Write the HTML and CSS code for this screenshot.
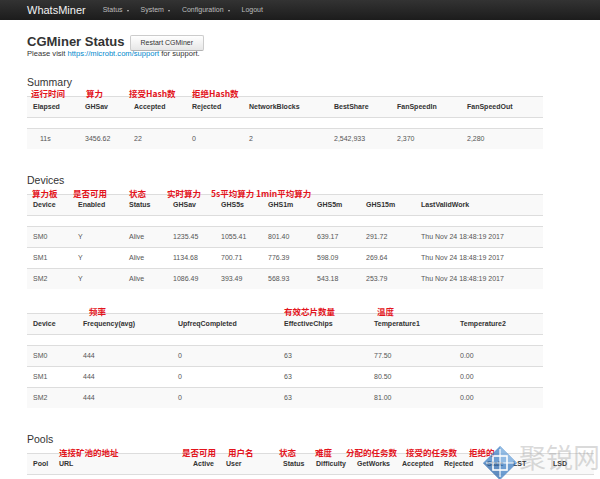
FILE: index.html
```html
<!DOCTYPE html>
<html lang="zh">
<head>
<meta charset="utf-8">
<title>WhatsMiner - CGMiner Status</title>
<link rel="stylesheet" href="styles.css">
</head>
<body>
<header class="navbar">
  <span class="brand">WhatsMiner</span>
  <ul class="nav">
    <li><a>Status<i class="caret"></i></a></li>
    <li><a>System<i class="caret"></i></a></li>
    <li><a>Configuration<i class="caret"></i></a></li>
    <li><a>Logout</a></li>
  </ul>
</header>
<main class="page">
  <div class="title-row">
    <h1>CGMiner Status</h1>
    <button class="btn">Restart CGMiner</button>
  </div>
  <p class="support">Please visit <a href="#">https://microbt.com/support</a> for support.</p>

  <h3 class="section">Summary</h3>
  <div class="tbl-wrap">
    <span class="note s1">运行时间</span>
    <span class="note s2">算力</span>
    <span class="note s3">接受Hash数</span>
    <span class="note s4">拒绝Hash数</span>
    <table class="t516">
      <colgroup>
        <col class="w52"><col class="w49"><col class="w58"><col class="w57"><col class="w85"><col class="w63"><col class="w70"><col class="w82">
      </colgroup>
      <tr class="odd"><th>Elapsed</th><th>GHSav</th><th>Accepted</th><th>Rejected</th><th>NetworkBlocks</th><th>BestShare</th><th>FanSpeedIn</th><th>FanSpeedOut</th></tr>
      <tr class="gap"><td colspan="8">&nbsp;</td></tr>
      <tr class="odd"><td class="indent">11s</td><td>3456.62</td><td>22</td><td>0</td><td>2</td><td>2,542,933</td><td>2,370</td><td>2,280</td></tr>
    </table>
  </div>

  <h3 class="section">Devices</h3>
  <div class="tbl-wrap">
    <span class="note d1">算力板</span>
    <span class="note d2">是否可用</span>
    <span class="note d3">状态</span>
    <span class="note d4">实时算力</span>
    <span class="note d5">5s平均算力</span>
    <span class="note d6">1min平均算力</span>
    <table class="t516">
      <colgroup>
        <col class="w45"><col class="w51"><col class="w44"><col class="w48"><col class="w47"><col class="w49"><col class="w49"><col class="w55"><col class="w128">
      </colgroup>
      <tr class="odd"><th>Device</th><th>Enabled</th><th>Status</th><th>GHSav</th><th>GHS5s</th><th>GHS1m</th><th>GHS5m</th><th>GHS15m</th><th>LastValidWork</th></tr>
      <tr class="gap"><td colspan="9">&nbsp;</td></tr>
      <tr class="odd"><td>SM0</td><td>Y</td><td>Alive</td><td>1235.45</td><td>1055.41</td><td>801.40</td><td>639.17</td><td>291.72</td><td>Thu Nov 24 18:48:19 2017</td></tr>
      <tr><td>SM1</td><td>Y</td><td>Alive</td><td>1134.68</td><td>700.71</td><td>776.39</td><td>598.09</td><td>269.64</td><td>Thu Nov 24 18:48:19 2017</td></tr>
      <tr class="odd"><td>SM2</td><td>Y</td><td>Alive</td><td>1086.49</td><td>393.49</td><td>568.93</td><td>543.18</td><td>253.79</td><td>Thu Nov 24 18:48:19 2017</td></tr>
    </table>
  </div>

  <div class="tbl-wrap">
    <span class="note e1">频率</span>
    <span class="note e2">有效芯片数量</span>
    <span class="note e3">温度</span>
    <table class="t516">
      <colgroup>
        <col class="w50"><col class="w95"><col class="w106"><col class="w90"><col class="w86"><col class="w89">
      </colgroup>
      <tr class="odd"><th>Device</th><th>Frequency(avg)</th><th>UpfreqCompleted</th><th>EffectiveChips</th><th>Temperature1</th><th>Temperature2</th></tr>
      <tr class="gap"><td colspan="6">&nbsp;</td></tr>
      <tr class="odd"><td>SM0</td><td>444</td><td>0</td><td>63</td><td>77.50</td><td>0.00</td></tr>
      <tr><td>SM1</td><td>444</td><td>0</td><td>63</td><td>80.50</td><td>0.00</td></tr>
      <tr class="odd"><td>SM2</td><td>444</td><td>0</td><td>63</td><td>81.00</td><td>0.00</td></tr>
    </table>
  </div>

  <h3 class="section">Pools</h3>
  <div class="tbl-wrap">
    <span class="note p1">连接矿池的地址</span>
    <span class="note p2">是否可用</span>
    <span class="note p3">用户名</span>
    <span class="note p4">状态</span>
    <span class="note p5">难度</span>
    <span class="note p6">分配的任务数</span>
    <span class="note p7">接受的任务数</span>
    <span class="note p8">拒绝的</span>
    <table class="t567">
      <colgroup>
        <col class="w26"><col class="w134"><col class="w33"><col class="w57"><col class="w33"><col class="w41"><col class="w45"><col class="w42"><col class="w43"><col class="w26"><col class="w40"><col class="w47">
      </colgroup>
      <tr class="odd"><th>Pool</th><th>URL</th><th>Active</th><th>User</th><th>Status</th><th>Difficulty</th><th>GetWorks</th><th>Accepted</th><th>Rejected</th><th>Stale</th><th>LST</th><th>LSD</th></tr>
      <tr class="gap"><td colspan="12">&nbsp;</td></tr>
    </table>
  </div>
</main>

<div class="wm-logo">
  <svg width="34" height="34" viewBox="0 0 34 34">
    <polygon points="17,0 34,17 17,34 0,17" fill="#3f7fc4"/>
    <polygon points="17,0 34,17 17,17" fill="#6fa6dc"/>
    <polygon points="0,17 17,34 17,17" fill="#2f6aae"/>
    <rect x="10" y="10" width="14" height="14" fill="none" stroke="#fff" stroke-width="1.6"/>
    <path d="M17 3 V31 M3 17 H31" stroke="#fff" stroke-width="1.2"/>
  </svg>
</div>
<div class="wm-text">聚锐网</div>
</body>
</html>
```
FILE: styles.css
```css
* { box-sizing: border-box; }
html, body { margin: 0; background: #fff; }
body {
  font-family: "Liberation Sans", Arial, sans-serif;
  color: #333;
  width: 600px;
  height: 479px;
  overflow: hidden;
  position: relative;
}

/* navbar */
.navbar {
  height: 20px;
  display: flex;
  align-items: center;
  padding-left: 27px;
  background: linear-gradient(#333, #1c1c1c);
}
.brand {
  font-size: 11px;
  line-height: 20px;
  color: #f2f2f2;
}
.nav {
  display: flex;
  list-style: none;
  margin: 0 0 0 11px;
  padding: 0;
}
.nav a {
  display: flex;
  align-items: center;
  padding: 0 6px;
  font-size: 7px;
  line-height: 20px;
  color: #bdbdbd;
}
.caret {
  display: inline-block;
  width: 0;
  height: 0;
  margin: 1px 0 0 4px;
  border-left: 1.5px solid transparent;
  border-right: 1.5px solid transparent;
  border-top: 2px solid #bdbdbd;
}

/* page */
.page { padding-left: 27px; }
.title-row {
  display: flex;
  margin-top: 14px;
  height: 15px;
}
h1 {
  margin: 0;
  font-size: 13px;
  line-height: 15px;
  font-weight: bold;
  color: #333;
}
.btn {
  margin: 1px 0 0 5px;
  height: 16px;
  padding: 0 10px;
  font-family: "Liberation Sans", Arial, sans-serif;
  font-size: 7px;
  line-height: 14px;
  color: #333;
  background: linear-gradient(#ffffff, #e6e6e6);
  border: 1px solid #cccccc;
  border-bottom-color: #b3b3b3;
  border-radius: 2px;
}
.support {
  margin: 0;
  font-size: 7.6px;
  line-height: 10px;
  color: #333;
}
.support a { color: #0088cc; text-decoration: none; }

.section {
  margin: 16px 0 7px;
  font-size: 10.5px;
  line-height: 14px;
  font-weight: normal;
  color: #333;
}

/* tables */
.tbl-wrap {
  position: relative;
  margin-bottom: 24px;
}
table {
  border-collapse: separate;
  border-spacing: 0;
  table-layout: fixed;
  font-size: 7px;
}
.t516 { width: 516px; }
.t567 { width: 567px; }
th, td {
  padding: 0 0 0 6px;
  line-height: 20px;
  border-top: 1px solid #dddddd;
  text-align: left;
  white-space: nowrap;
  overflow: visible;
}
th { font-weight: bold; color: #333; }
td { color: #555; }
tr.odd th, tr.odd td { background: #f9f9f9; }
tr.gap td { line-height: 10px; }
td.indent { padding-left: 13px; }

.w26 { width: 26px; } .w33 { width: 33px; } .w40 { width: 40px; } .w41 { width: 41px; }
.w42 { width: 42px; } .w43 { width: 43px; } .w44 { width: 44px; } .w45 { width: 45px; }
.w47 { width: 47px; } .w48 { width: 48px; } .w49 { width: 49px; } .w50 { width: 50px; }
.w51 { width: 51px; } .w52 { width: 52px; } .w55 { width: 55px; } .w57 { width: 57px; }
.w58 { width: 58px; } .w63 { width: 63px; } .w70 { width: 70px; } .w82 { width: 82px; }
.w85 { width: 85px; } .w86 { width: 86px; } .w89 { width: 89px; } .w90 { width: 90px; }
.w95 { width: 95px; } .w106 { width: 106px; } .w128 { width: 128px; } .w134 { width: 134px; }

/* red annotations drawn over the table tops */
.note {
  position: absolute;
  top: -6px;
  z-index: 2;
  font-family: "Noto Sans CJK SC", "Liberation Sans", sans-serif;
  font-weight: bold;
  font-size: 8.5px;
  line-height: 11px;
  color: #e3141c;
  white-space: nowrap;
}
.s1 { left: 4px; top: -8px; } .s2 { left: 59px; top: -8px; } .s3 { left: 102px; top: -8px; } .s4 { left: 165px; top: -8px; }
.d1 { left: 5px; } .d2 { left: 46px; } .d3 { left: 102px; } .d4 { left: 140px; } .d5 { left: 184px; } .d6 { left: 229px; }
.e1 { left: 62px; top: -7px; } .e2 { left: 257px; top: -7px; } .e3 { left: 350px; top: -7px; }
.p1 { left: 32px; } .p2 { left: 155px; } .p3 { left: 201px; } .p4 { left: 252px; }
.p5 { left: 288px; } .p6 { left: 319px; } .p7 { left: 379px; } .p8 { left: 442px; }

/* watermark */
.wm-logo {
  position: absolute;
  left: 483px;
  top: 446px;
  width: 34px;
  height: 34px;
  opacity: 0.75;
  z-index: 3;
}
.wm-logo svg { display: block; }
.wm-text {
  position: absolute;
  left: 519px;
  top: 440px;
  font-family: "Noto Sans CJK SC", sans-serif;
  font-size: 27px;
  line-height: 34px;
  color: rgba(150, 150, 150, 0.35);
  white-space: nowrap;
  z-index: 3;
}
```
